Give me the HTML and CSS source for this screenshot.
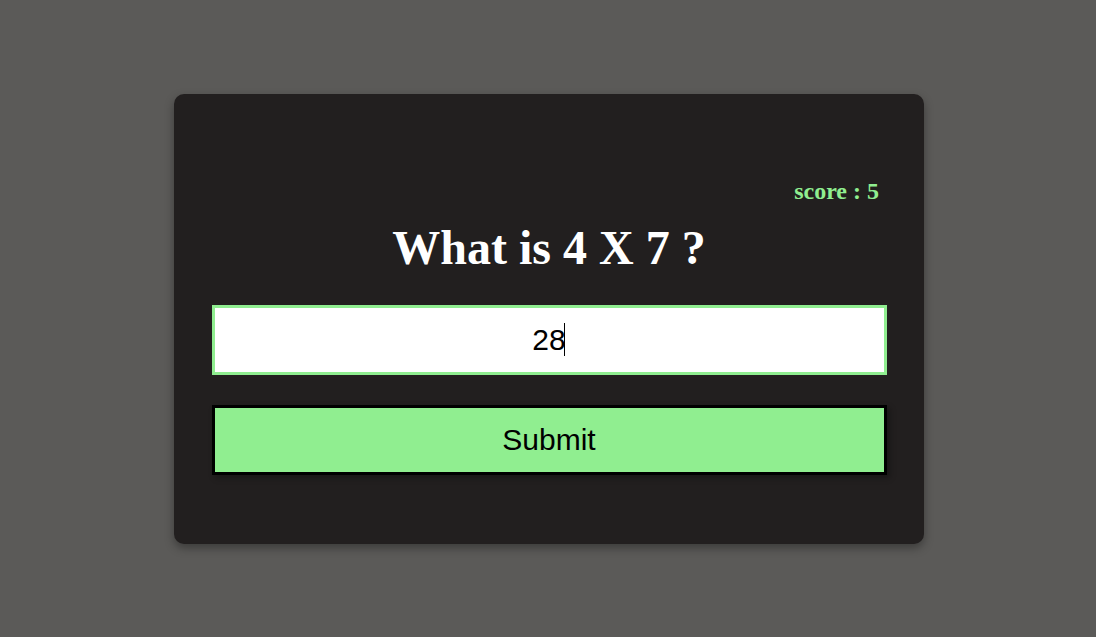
FILE: index.html
```html
<!DOCTYPE html>
<html>
<head>
<meta charset="utf-8">
<link rel="stylesheet" href="styles.css">
</head>
<body>
<div class="card">
  <div class="score">score : 5</div>
  <h1 class="question">What is 4 X 7 ?</h1>
  <div class="field">
    <input class="answer" type="text" value="28">
    <span class="caret"></span>
  </div>
  <button class="submit">Submit</button>
</div>
</body>
</html>
```
FILE: styles.css
```css
html, body {
  margin: 0;
  padding: 0;
}
body {
  background: #5b5a58;
  width: 1096px;
  height: 637px;
  display: flex;
  justify-content: center;
  align-items: flex-start;
  font-family: "Liberation Serif", serif;
}
.card {
  margin-top: 94px;
  margin-left: 2px;
  width: 750px;
  height: 450px;
  box-sizing: border-box;
  background: #221f1f;
  border-radius: 10px;
  box-shadow: 0 4px 10px rgba(0, 0, 0, 0.35);
  display: flex;
  flex-direction: column;
  align-items: center;
  padding-top: 84px;
}
.score {
  align-self: flex-end;
  margin-right: 45px;
  color: #90ee90;
  font-weight: bold;
  font-size: 24px;
}
.question {
  margin: 15px 0 0 0;
  color: #ffffff;
  font-size: 48px;
  font-weight: bold;
}
.field {
  position: relative;
  margin-top: 30px;
  width: 90%;
  height: 70px;
}
.answer {
  display: block;
  width: 100%;
  height: 70px;
  box-sizing: border-box;
  border: 3px solid #90ee90;
  background: #fff;
  outline: none;
  text-align: center;
  font-family: "Liberation Sans", sans-serif;
  font-size: 30px;
  color: #000;
  padding: 0;
  margin: 0;
}
.caret {
  position: absolute;
  left: calc(50% + 15px);
  top: 18px;
  width: 1px;
  height: 33px;
  background: #000;
}
.submit {
  margin-top: 30px;
  width: 90%;
  height: 70px;
  box-sizing: border-box;
  border: 3px solid #000;
  background: #90ee90;
  font-family: "Liberation Sans", sans-serif;
  font-size: 30px;
  color: #000;
  box-shadow: 3px 3px 6px rgba(0, 0, 0, 0.3);
  padding: 0;
}
```
